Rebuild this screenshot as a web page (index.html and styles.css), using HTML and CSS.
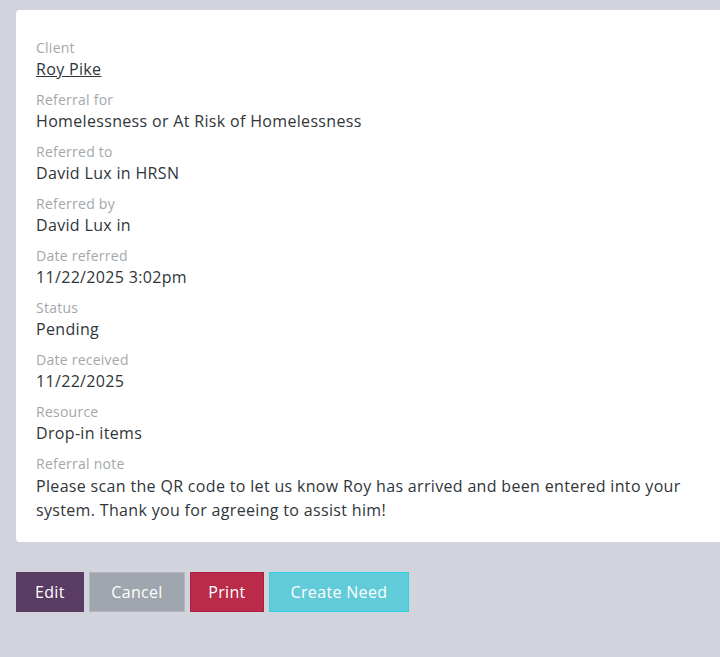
FILE: index.html
```html
<!DOCTYPE html>
<html lang="en">
<head>
<meta charset="utf-8">
<title>Referral</title>
<link rel="stylesheet" href="styles.css">
</head>
<body>
<main class="page">
  <section class="card">
    <dl class="details">
      <div class="field">
        <dt class="label">Client</dt>
        <dd class="value"><a class="link" href="#">Roy Pike</a></dd>
      </div>
      <div class="field">
        <dt class="label">Referral for</dt>
        <dd class="value">Homelessness or At Risk of Homelessness</dd>
      </div>
      <div class="field">
        <dt class="label">Referred to</dt>
        <dd class="value">David Lux in HRSN</dd>
      </div>
      <div class="field">
        <dt class="label">Referred by</dt>
        <dd class="value">David Lux in</dd>
      </div>
      <div class="field">
        <dt class="label">Date referred</dt>
        <dd class="value">11/22/2025 3:02pm</dd>
      </div>
      <div class="field">
        <dt class="label">Status</dt>
        <dd class="value">Pending</dd>
      </div>
      <div class="field">
        <dt class="label">Date received</dt>
        <dd class="value">11/22/2025</dd>
      </div>
      <div class="field">
        <dt class="label">Resource</dt>
        <dd class="value">Drop-in items</dd>
      </div>
      <div class="field">
        <dt class="label">Referral note</dt>
        <dd class="value note">Please scan the QR code to let us know Roy has arrived and been entered into your system. Thank you for agreeing to assist him!</dd>
      </div>
    </dl>
  </section>
  <div class="actions">
    <button class="btn btn-edit" type="button">Edit</button>
    <button class="btn btn-cancel" type="button">Cancel</button>
    <button class="btn btn-print" type="button">Print</button>
    <button class="btn btn-need" type="button">Create Need</button>
  </div>
</main>
</body>
</html>
```
FILE: styles.css
```css
html {
  overflow: hidden;
}
body {
  margin: 0;
  background: #d1d4dc;
  font-family: "Open Sans", "Liberation Sans", sans-serif;
  color: #2f3337;
}
.page {
  padding: 10px 0 0 16px;
  width: 760px;
}
.card {
  background: #ffffff;
  border-radius: 4px;
  padding: 29px 20px 20px 20px;
}
.details {
  margin: 0;
  width: 690px;
}
.field {
  margin-bottom: 10px;
}
.field:last-child {
  margin-bottom: 0;
}
.label {
  font-size: 14px;
  line-height: 18px;
  letter-spacing: 0.25px;
  color: #a4a7ab;
}
.value {
  margin: 0;
  font-size: 16px;
  line-height: 24px;
  letter-spacing: 0.33px;
  color: #30353a;
}
.note {
  padding-top: 1px;
}
.link {
  color: #30353a;
  text-decoration: underline;
}
.actions {
  display: flex;
  gap: 5px;
  margin-top: 30px;
}
.btn {
  font-family: inherit;
  font-size: 16px;
  letter-spacing: 0.33px;
  color: #ffffff;
  height: 40px;
  padding: 0 19px;
  border: 1px solid transparent;
  border-radius: 0;
  cursor: pointer;
}
.btn-edit {
  background: #5a3b63;
  border-color: #5a3b63;
  padding: 0 18px;
}
.btn-cancel {
  background: #a0a6ad;
  border-color: #b4b8bd;
  padding: 0 21.5px;
}
.btn-print {
  background: #b92b48;
  border-color: #a8203c;
  padding: 0 17px;
}
.btn-need {
  background: #62cbd9;
  border-color: #2ed3e3;
  padding: 0 21px;
}
```
